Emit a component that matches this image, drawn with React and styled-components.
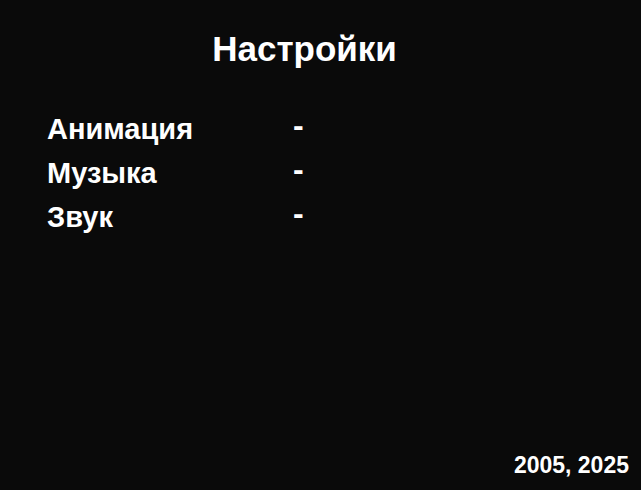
import React from "react";
import styled, { createGlobalStyle } from "styled-components";

const GlobalStyle = createGlobalStyle`
  *, *::before, *::after { box-sizing: border-box; }
  body {
    margin: 0;
    background: #0a0a0a;
    color: #ffffff;
    font-family: "Liberation Sans", Arial, sans-serif;
    font-weight: 700;
  }
`;

const Page = styled.main`
  display: flex;
  flex-direction: column;
  min-height: 100vh;
`;

const Title = styled.h1`
  margin: 0;
  padding: 29px 32px 0 0;
  font-size: 35px;
  line-height: 40px;
  text-align: center;
`;

const Settings = styled.dl`
  display: grid;
  grid-template-columns: 246px 1fr;
  row-gap: 12px;
  margin: 44px 0 0;
  padding: 0 47px;
  font-size: 29px;
  line-height: 32px;
`;

const Name = styled.dt`
  margin: 0;
`;

const Value = styled.dd`
  margin: 0;
  font-size: 32px;
  line-height: 24px;
`;

const Footer = styled.footer`
  margin-top: auto;
  padding: 0 12px 12px;
  font-size: 23px;
  line-height: 26px;
  text-align: right;
`;

const settings = ["Анимация", "Музыка", "Звук"];

export default function App() {
  return (
    <>
      <GlobalStyle />
      <Page>
        <Title>Настройки</Title>
        <Settings>
          {settings.map((name) => (
            <React.Fragment key={name}>
              <Name>{name}</Name>
              <Value>-</Value>
            </React.Fragment>
          ))}
        </Settings>
        <Footer>2005, 2025</Footer>
      </Page>
    </>
  );
}
